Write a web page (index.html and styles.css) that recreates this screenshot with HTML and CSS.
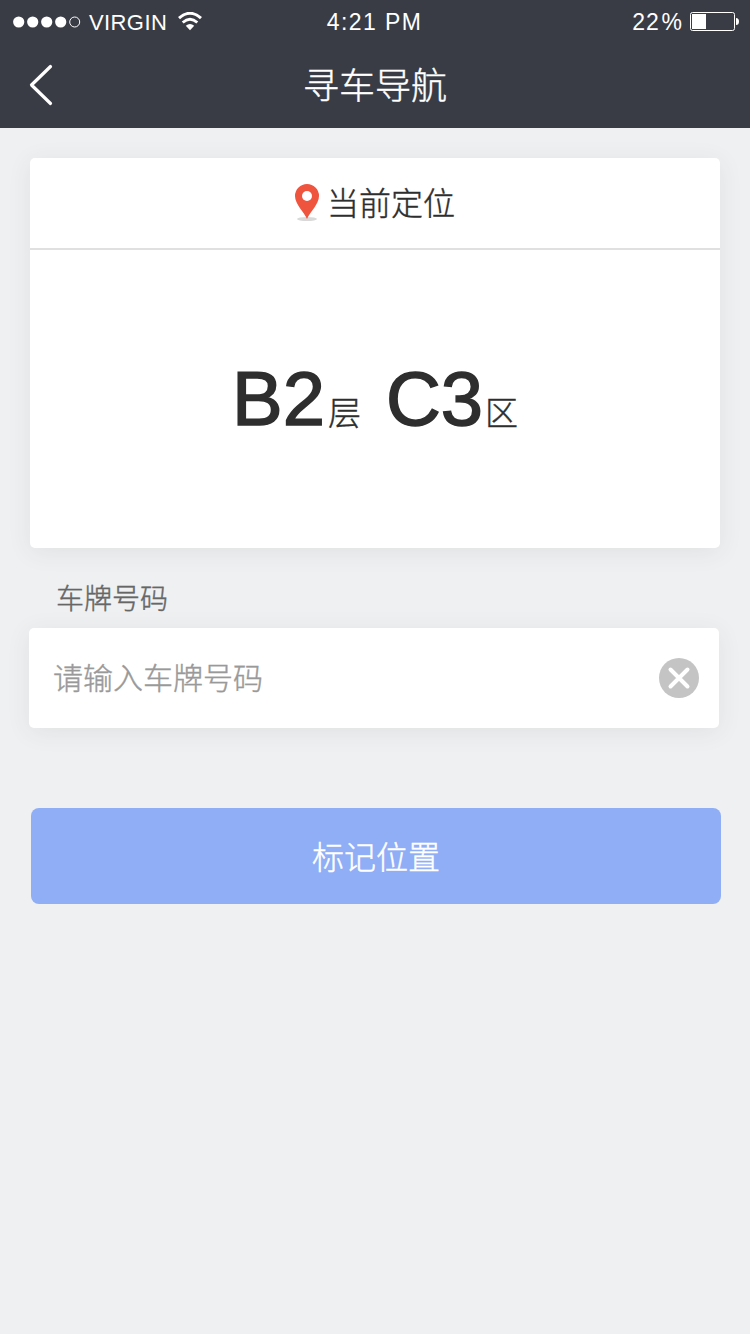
FILE: index.html
```html
<!DOCTYPE html>
<html lang="zh-CN">
<head>
<meta charset="utf-8">
<title>寻车导航</title>
<link rel="stylesheet" href="styles.css">
</head>
<body>
<header class="top">
  <div class="status">
    <div class="status-left">
      <svg class="signal" width="68" height="12" viewBox="0 0 68 12"><g fill="#fff"><circle cx="5.7" cy="6" r="5.6"/><circle cx="19.7" cy="6" r="5.6"/><circle cx="33.7" cy="6" r="5.6"/><circle cx="47.7" cy="6" r="5.6"/></g><circle cx="61.7" cy="6" r="5" fill="none" stroke="#fff"/></svg>
      <span class="carrier">VIRGIN</span>
      <svg class="wifi" width="24" height="19" viewBox="0 0 24 19"><path d="M1 6.2Q12-3.6 23 6.2" fill="none" stroke="#fff" stroke-width="3"/><path d="M4.7 10.5Q12 4 19.3 10.5" fill="none" stroke="#fff" stroke-width="2.8"/><path d="M7.8 13.7Q12 10.4 16.2 13.7L12 18.2Z" fill="#fff"/></svg>
    </div>
    <span class="clock">4:21 PM</span>
    <div class="status-right">
      <span class="percent">22<span class="sign">%</span></span>
      <svg class="battery" width="49" height="19" viewBox="0 0 49 19"><rect x=".5" y=".5" width="44" height="18" rx="2" fill="none" stroke="#fff"/><path d="M2 2H16V17H2ZM46 6Q49 6 49 9.5T46 13Z" fill="#fff"/></svg>
    </div>
  </div>
  <nav class="nav">
    <svg class="back" width="24" height="42" viewBox="0 0 24 42"><path d="M21.5 2.5L2.5 21L21.5 39.5" fill="none" stroke="#fff" stroke-width="3.2" stroke-linecap="round" stroke-linejoin="round"/></svg>
    <h1 class="title">寻车导航</h1>
  </nav>
</header>
<main class="content">
  <section class="card">
    <div class="card-head">
      <svg class="pin" width="26" height="38" viewBox="0 0 26 38"><ellipse cx="13" cy="35" rx="10" ry="2" fill="#d9d9d9"/><path d="M13 35C10 28 1 20 1 12A12 12 0 0 1 25 12C25 20 16 28 13 35Z" fill="#ef543f"/><circle cx="13" cy="12" r="5" fill="#fff"/></svg>
      <span>当前定位</span>
    </div>
    <div class="place">
      <span class="code">B2</span><span class="unit">层</span>
      <span class="code zone">C3</span><span class="unit">区</span>
    </div>
  </section>
  <label class="label">车牌号码</label>
  <div class="field">
    <span class="placeholder">请输入车牌号码</span>
    <svg width="40" height="40" viewBox="0 0 40 40"><circle cx="20" cy="20" r="20" fill="#c4c4c4"/><path d="M11.5 11.5L28.5 28.5M28.5 11.5L11.5 28.5" stroke="#fff" stroke-width="4" stroke-linecap="round"/></svg>
  </div>
  <div class="submit">标记位置</div>
</main>
</body>
</html>
```
FILE: styles.css
```css
* { box-sizing: border-box; }
body {
  margin: 0;
  min-height: 1334px;
  background: #eff0f2;
  color: #2e2e2e;
  font-family: "Liberation Sans", "Noto Sans CJK SC", sans-serif;
}
svg { display: block; flex: none; }
.top { height: 128px; background: #393c45; color: #fff; }
.status {
  display: grid;
  grid-template-columns: 1fr auto 1fr;
  height: 43px;
  padding: 0 11px 0 13px;
  font-size: 23px;
  line-height: 41px;
}
.status-left, .status-right { display: flex; align-items: center; }
.status-right { justify-content: flex-end; }
.carrier { padding-top: 2px; margin-left: 8px; font-size: 22px; letter-spacing: .4px; }
.wifi { margin-left: 11px; }
.clock { padding-top: 2px; margin-right: 3px; letter-spacing: 1.4px; }
.percent { padding-top: 2px; margin-right: 8px; letter-spacing: .8px; }
.sign { margin-left: 2px; letter-spacing: 0; }
.nav {
  display: grid;
  grid-template-columns: 60px 1fr 60px;
  align-items: center;
  height: 84px;
}
.back { margin-left: 29px; }
.title {
  margin: 0;
  padding-bottom: 4px;
  text-align: center;
  font: 300 36px/52px "Noto Sans CJK SC", sans-serif;
}
.title, .card-head, .unit, .label, .placeholder, .submit { -webkit-text-stroke: .4px currentColor; }
.content { padding: 30px 30px 0; }
.card {
  height: 390px;
  background: #fff;
  border-radius: 5px;
  box-shadow: 0 4px 24px rgba(50, 60, 40, .08);
}
.card-head {
  display: flex;
  align-items: center;
  justify-content: center;
  gap: 7px;
  height: 92px;
  padding-right: 1px;
  border-bottom: 2px solid #e0e0e0;
  font: 300 32px/46px "Noto Sans CJK SC", sans-serif;
}
.card-head span { padding-bottom: 4px; }
.place {
  display: flex;
  align-items: baseline;
  justify-content: center;
  padding-top: 105px;
}
.code { font-size: 76px; line-height: 88px; -webkit-text-stroke: 1.5px #2e2e2e; }
.unit { margin-left: 3px; font: 300 33px/40px "Noto Sans CJK SC", sans-serif; }
.zone { margin-left: 25px; }
.zone + .unit { margin-left: 2px; }
.label {
  display: block;
  height: 80px;
  padding: 29px 26px 0;
  color: #666;
  font: 300 28px/40px "Noto Sans CJK SC", sans-serif;
}
.field {
  display: flex;
  align-items: center;
  justify-content: space-between;
  width: 690px;
  height: 100px;
  margin-left: -1px;
  padding: 0 20px 0 24px;
  background: #fff;
  border-radius: 5px;
  box-shadow: 0 4px 24px rgba(50, 60, 40, .08);
  color: #999;
  font: 300 30px/44px "Noto Sans CJK SC", sans-serif;
}
.placeholder { padding-bottom: 4px; }
.submit {
  width: 690px;
  height: 96px;
  margin: 80px 0 0 1px;
  background: #8faef6;
  border-radius: 8px;
  color: #fff;
  text-align: center;
  font: 300 32px/94px "Noto Sans CJK SC", sans-serif;
}
```
